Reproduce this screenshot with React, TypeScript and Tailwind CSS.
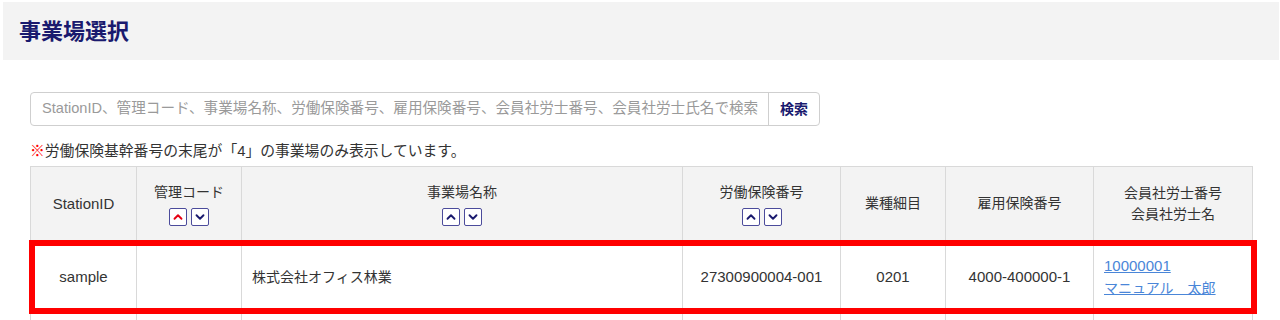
import { ChevronUp, ChevronDown } from "lucide-react";

const font = { fontFamily: '"Liberation Sans", "Noto Sans CJK JP", sans-serif' };

const cols = [
  { w: "w-[106px]", label: ["StationID"], sort: false, latin: true },
  { w: "w-[105px]", label: ["管理コード"], sort: true, active: true },
  { w: "w-[441px]", label: ["事業場名称"], sort: true },
  { w: "w-[158px]", label: ["労働保険番号"], sort: true },
  { w: "w-[105px]", label: ["業種細目"], sort: false },
  { w: "w-[148px]", label: ["雇用保険番号"], sort: false },
  { w: "w-[159px]", label: ["会員社労士番号", "会員社労士名"], sort: false },
];

const cell = "border border-[#d9d9d9]";

function SortButtons({ active }: { active?: boolean }) {
  return (
    <div className="mt-[5px] flex justify-center gap-[4px]">
      <button className="flex h-[18px] w-[18px] items-center justify-center rounded-[2px] border border-[#4b4b9b] bg-white">
        <ChevronUp size={14} strokeWidth={3.2} className={active ? "text-[#e60012]" : "text-[#1a1a6e]"} />
      </button>
      <button className="flex h-[18px] w-[18px] items-center justify-center rounded-[2px] border border-[#4b4b9b] bg-white">
        <ChevronDown size={14} strokeWidth={3.2} className="text-[#1a1a6e]" />
      </button>
    </div>
  );
}

export default function App() {
  return (
    <div className="h-[320px] overflow-hidden bg-white text-[#333]" style={font}>
      <div className="ml-[3px] mr-[1px] mt-[2px] flex h-[58px] items-center bg-[#f3f3f3] px-4">
        <h1 className="text-[22px] font-bold text-[#1a1a6e]">事業場選択</h1>
      </div>

      <div className="px-[30px]">
        <div className="mt-[32px] flex h-[34px] w-[790px] rounded-[4px] border border-[#cfcfcf]">
          <input
            className="min-w-0 flex-1 pl-[11px] pr-[2px] text-[14.6px] outline-none placeholder:text-[#9a9a9a]"
            placeholder="StationID、管理コード、事業場名称、労働保険番号、雇用保険番号、会員社労士番号、会員社労士氏名で検索"
          />
          <button className="w-[51px] border-l border-[#cfcfcf] text-[14px] font-bold text-[#1a1a6e]">検索</button>
        </div>

        <p className="mt-[15px] text-[14.8px] leading-[20px]">
          <span className="font-bold text-[#ff0000]">※</span>労働保険基幹番号の末尾が「4」の事業場のみ表示しています。
        </p>

        <div className="relative mt-[5px] w-[1222px]">
          <table className="w-[1222px] table-fixed border-collapse text-[14px]">
            <thead>
              <tr className="h-[74px] bg-[#f3f3f3]">
                {cols.map((c, i) => (
                  <th
                    key={i}
                    className={`${c.w} ${cell} px-2 text-center font-normal leading-[21px] ${c.latin ? "text-[15px]" : ""}`}
                  >
                    {c.label.map((l) => (
                      <div key={l}>{l}</div>
                    ))}
                    {c.sort && <SortButtons active={c.active} />}
                  </th>
                ))}
              </tr>
            </thead>
            <tbody>
              <tr className="h-[73px]">
                <td className={`${cell} text-center text-[15px]`}>sample</td>
                <td className={cell}></td>
                <td className={`${cell} px-[10px]`}>株式会社オフィス林業</td>
                <td className={`${cell} text-center text-[15px]`}>27300900004-001</td>
                <td className={`${cell} text-center text-[15px]`}>0201</td>
                <td className={`${cell} text-center text-[15px]`}>4000-400000-1</td>
                <td className={`${cell} px-[10px] leading-[22px]`}>
                  <a href="#" className="block text-[15px] text-[#4a86d8] underline">10000001</a>
                  <a href="#" className="block text-[#4a86d8] underline">マニュアル　太郎</a>
                </td>
              </tr>
              <tr className="h-[73px]">
                {cols.map((c, i) => (
                  <td key={i} className={cell}></td>
                ))}
              </tr>
            </tbody>
          </table>
          <div className="pointer-events-none absolute left-[-1px] top-[74px] h-[74px] w-[1228px] border-[6px] border-[#ff0000]" />
        </div>
      </div>
    </div>
  );
}
